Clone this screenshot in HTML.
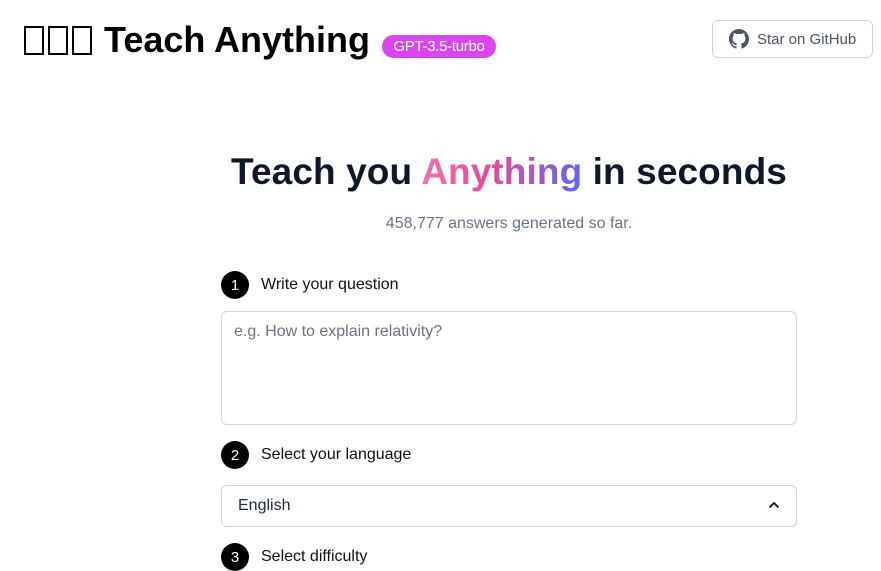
<!DOCTYPE html>
<html><head><meta charset="utf-8"><style>
*{box-sizing:border-box;margin:0;padding:0}
body{width:881px;height:567px;overflow:hidden;background:#fff;font-family:"Liberation Sans","DejaVu Sans",sans-serif;color:#000;position:relative}
.logo{position:absolute;left:24px;top:19px;font-size:36px;font-weight:bold;display:flex;align-items:center;white-space:nowrap}
.box{display:inline-block;width:20px;height:29px;border:2.5px solid #000;margin-right:4px}
.badge{position:absolute;left:382px;top:35px;width:114px;height:23px;border-radius:12px;background:#d946ef;color:#fff;font-size:15px;line-height:23px;text-align:center;letter-spacing:-0.3px}
.gh{position:absolute;left:712px;top:20px;width:161px;height:38px;border:1px solid #d1d5db;border-radius:6px;display:flex;align-items:center;padding-left:16px;font-size:15px;color:#4b5563}
.gh svg{margin-right:8px}
h1{position:absolute;left:0;width:1018px;top:151px;text-align:center;font-size:37px;font-weight:bold;color:#0f172a;letter-spacing:0.1px}
.grad{background:linear-gradient(90deg,#f472b6,#ec4899 40%,#6366f1);-webkit-background-clip:text;background-clip:text;color:transparent}
.sub{position:absolute;left:0;width:1018px;top:215px;text-align:center;font-size:16px;color:#64748b}
.step{position:absolute;left:221px;display:flex;align-items:center;font-size:16px;color:#111}
.num{width:28px;height:28px;border-radius:50%;background:#000;color:#fff;font-size:15px;display:flex;align-items:center;justify-content:center;margin-right:12px}
.ta{position:absolute;left:221px;top:311px;width:576px;height:114px;border:1px solid #d1d5db;border-radius:6px;padding:11px 12px;font-size:16px;color:#6b7280}
.sel{position:absolute;left:221px;top:485px;width:576px;height:42px;border:1px solid #d1d5db;border-radius:6px;padding-left:16px;font-size:16px;color:#1f2937;display:flex;align-items:center}
.sel svg{position:absolute;right:16px;top:15px}
</style></head><body>
<div class="logo"><span class="box"></span><span class="box"></span><span class="box" style="margin-right:12px"></span>Teach Anything</div>
<div class="badge">GPT-3.5-turbo</div>
<div class="gh"><svg width="20" height="20" viewBox="0 0 16 16" fill="#4b5563"><path d="M8 0C3.58 0 0 3.58 0 8c0 3.54 2.29 6.53 5.47 7.590.4.07.55-.17.55-.38 0-.19-.01-.82-.01-1.49-2.01.37-2.530-.49-2.690-.94-.09-.23-.48-.94-.82-1.13-.28-.15-.68-.52-.01-.53.63-.01 1.08.58 1.23.82.72 1.21 1.87.87 2.33.66.07-.52.28-.87.51-1.07-1.78-.2-3.64-.89-3.64-3.95 0-.87.31-1.59.82-2.150-.08-.2-.36-1.02.08-2.12 0 0 .67-.21 2.2.82.64-.18 1.32-.27 2-.27.68 0 1.36.09 2 .27 1.53-1.04 2.2-.82 2.2-.82.44 1.1.16 1.92.08 2.12.51.56.82 1.27.82 2.15 0 3.07-1.87 3.75-3.65 3.95.29.25.54.73.54 1.48 0 1.07-.01 1.93-.01 2.2 0 .21.15.46.55.38A8.013 8.013 0 0016 8c0-4.420-3.58-8-8-8z"/></svg>Star on GitHub</div>
<h1>Teach you <span class="grad">Anything</span> in seconds</h1>
<div class="sub">458,777 answers generated so far.</div>
<div class="step" style="top:271px"><div class="num">1</div>Write your question</div>
<div class="ta">e.g. How to explain relativity?</div>
<div class="step" style="top:441px"><div class="num">2</div>Select your language</div>
<div class="sel">English<svg width="12" height="8" viewBox="0 0 12 8"><path d="M1.5 6.5L6 2l4.5 4.5" stroke="#111" stroke-width="1.8" fill="none"/></svg></div>
<div class="step" style="top:543px"><div class="num">3</div>Select difficulty</div>
</body></html>
